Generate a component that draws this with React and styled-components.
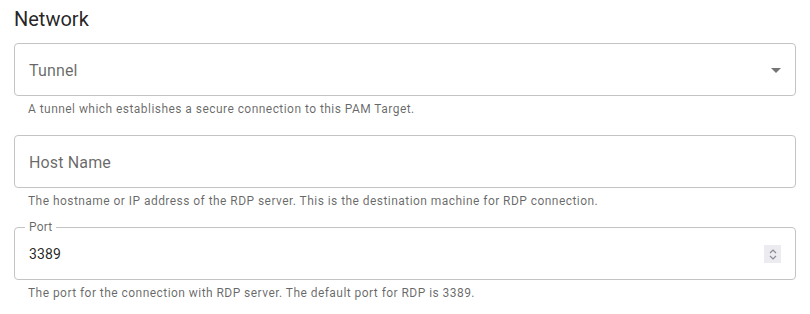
import React from 'react';
import styled, { createGlobalStyle } from 'styled-components';

const GlobalStyle = createGlobalStyle`
  body {
    margin: 0;
    background: #fff;
    font-family: Roboto, "Liberation Sans", sans-serif;
  }
`;

const Section = styled.div`
  width: 810px;
  padding: 0 14px;
  box-sizing: border-box;
`;

const Heading = styled.h2`
  margin: 0;
  padding-top: 7px;
  height: 43px;
  box-sizing: border-box;
  font-size: 20px;
  line-height: 24px;
  font-weight: 400;
  color: rgba(0, 0, 0, 0.87);
`;

const Field = styled.div`
  display: flex;
  flex-direction: column;
  margin-bottom: 16px;
`;

const Box = styled.fieldset`
  margin: ${(p) => (p.$labelled ? '-7px 0 0' : '0')};
  border: 1px solid #c4c4c4;
  border-radius: 4px;
  padding: 0 14px;
  min-width: 0;
`;

const Legend = styled.legend`
  font-size: 12px;
  line-height: 14px;
  padding: 0 4px;
  margin-left: -4px;
  color: rgba(0, 0, 0, 0.6);
  letter-spacing: 0.15px;
`;

const Row = styled.div`
  display: flex;
  align-items: center;
  box-sizing: border-box;
  height: ${(p) => (p.$labelled ? '45px' : '51px')};
  padding-top: ${(p) => (p.$labelled ? '0' : '2px')};
  padding-bottom: ${(p) => (p.$labelled ? '5px' : '0')};
`;

const Placeholder = styled.span`
  flex: 1;
  font-size: 16px;
  color: rgba(0, 0, 0, 0.6);
  letter-spacing: 0.15px;
`;

const Value = styled.span`
  flex: 1;
  font-size: 14px;
  color: rgba(0, 0, 0, 0.87);
  letter-spacing: 0.1px;
`;

const Spinner = styled.span`
  width: 17px;
  height: 18px;
  margin-right: 0;
  background: #ebebf0;
  display: flex;
  align-items: center;
  justify-content: center;
`;

const Helper = styled.p`
  margin: 3px 14px 0;
  font-size: 12px;
  line-height: 20px;
  letter-spacing: 0.45px;
  color: rgba(0, 0, 0, 0.6);
`;

const DropIcon = () => (
  <svg width="24" height="24" viewBox="0 0 24 24" style={{ marginRight: -7, marginTop: -2 }}>
    <path d="M7 10l5 5 5-5z" fill="rgba(0,0,0,0.54)" />
  </svg>
);

const SpinIcon = () => (
  <svg width="10" height="13" viewBox="0 0 10 13">
    <path d="M2 5l3-3 3 3M2 8l3 3 3-3" fill="none" stroke="#8a8a95" strokeWidth="1.2" />
  </svg>
);

export default function App() {
  return (
    <>
      <GlobalStyle />
      <Section>
        <Heading>Network</Heading>
        <Field>
          <Box>
            <Row>
              <Placeholder>Tunnel</Placeholder>
              <DropIcon />
            </Row>
          </Box>
          <Helper>A tunnel which establishes a secure connection to this PAM Target.</Helper>
        </Field>
        <Field>
          <Box>
            <Row>
              <Placeholder>Host Name</Placeholder>
            </Row>
          </Box>
          <Helper>The hostname or IP address of the RDP server. This is the destination machine for RDP connection.</Helper>
        </Field>
        <Field>
          <Box $labelled>
            <Legend>Port</Legend>
            <Row $labelled>
              <Value>3389</Value>
              <Spinner><SpinIcon /></Spinner>
            </Row>
          </Box>
          <Helper>The port for the connection with RDP server. The default port for RDP is 3389.</Helper>
        </Field>
      </Section>
    </>
  );
}
